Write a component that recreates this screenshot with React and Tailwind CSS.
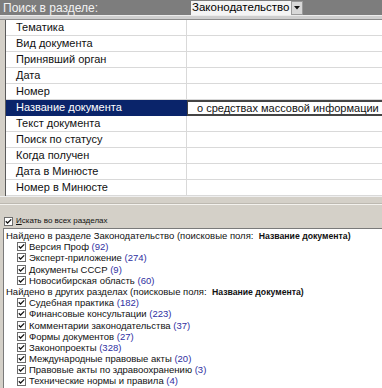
import React from 'react'

const fields = [
  'Тематика',
  'Вид документа',
  'Принявший орган',
  'Дата',
  'Номер',
  'Название документа',
  'Текст документа',
  'Поиск по статусу',
  'Когда получен',
  'Дата в Минюсте',
  'Номер в Минюсте',
]

const own = [
  ['Версия Проф', 92],
  ['Эксперт-приложение', 274],
  ['Документы СССР', 9],
  ['Новосибирская область', 60],
]

const other = [
  ['Судебная практика', 182],
  ['Финансовые консультации', 223],
  ['Комментарии законодательства', 37],
  ['Формы документов', 27],
  ['Законопроекты', 328],
  ['Международные правовые акты', 20],
  ['Правовые акты по здравоохранению', 3],
  ['Технические нормы и правила', 4],
]

function Check() {
  return (
    <span className="w-[9px] h-[9px] shrink-0 border border-[#6d6d6d] bg-white flex items-center justify-center">
      <svg viewBox="0 0 9 9" className="w-[7px] h-[7px]">
        <path d="M1 4.2 L3.3 6.5 L8 1.8" stroke="#111" strokeWidth="1.6" fill="none" />
      </svg>
    </span>
  )
}

function Item({ name, count }) {
  return (
    <div className="flex items-center h-[11.2px] pl-[11px] gap-[3px] whitespace-nowrap">
      <Check />
      <span>
        {name} <span className="text-[#2f2f9f]">({count})</span>
      </span>
    </div>
  )
}

function Found({ children }) {
  return (
    <div className="h-[11.2px] whitespace-nowrap">
      {children} (поисковые поля:&nbsp; <b className="text-[8.7px]">Название документа)</b>
    </div>
  )
}

export default function App() {
  return (
    <div className="w-[382px] h-[388px] overflow-hidden bg-[#d4d0c8] font-['Liberation_Sans',Arial,sans-serif]">
      <div className="h-[15px] bg-[#7d7d7d] flex items-center">
        <div className="w-[191px] pl-[3px] text-[12px] leading-none text-[#f2f2f2]">Поиск в разделе:</div>
        <div className="h-[14px] w-[100px] bg-[#f4f4f4] flex items-center pl-[1px] text-[11.5px] leading-none text-black whitespace-nowrap overflow-hidden">
          Законодательство
        </div>
        <div className="h-[14px] w-[12px] bg-[#d8d8d8] border border-[#9a9a9a] flex items-center justify-center">
          <svg viewBox="0 0 6 4" className="w-[6px] h-[4px]">
            <path d="M0 0 H6 L3 3.5 Z" fill="#111" />
          </svg>
        </div>
      </div>
      <div className="h-[5px] border-t border-[#ececec] border-b border-b-[#8c8c8c] bg-[#cfcfcf]" />

      <div className="ml-[5px] border-l border-[#5a5a5a] bg-white text-[11px] text-[#111]">
        {fields.map((f, i) =>
          i === 5 ? (
            <div key={f} className="flex h-[16px]">
              <div className="w-[181px] bg-[#0a246a] text-white pl-[10px] flex items-center border-b border-[#0a246a]">{f}</div>
              <div className="flex-1 border-y-2 border-l border-[#444] flex items-center pl-[9px] whitespace-nowrap overflow-hidden">
                о средствах массовой информации
              </div>
            </div>
          ) : (
            <div key={f} className="flex h-[16px] border-b border-[#d9d9d9]">
              <div className="w-[181px] pl-[10px] flex items-center border-r border-[#d9d9d9]">{f}</div>
              <div className="flex-1" />
            </div>
          )
        )}
      </div>

      <div className="h-[32px] border-t border-[#efefef] flex flex-col">
        <div className="h-[7px] border-b border-[#bdb9b1]" />
        <div className="h-[1px] bg-[#f4f2ee]" />
        <div className="flex-1 flex items-center gap-[3px] pl-[4px] pt-[9px] text-[8px] text-[#111]">
          <Check />
          <span>
            <span className="underline">И</span>скать во всех разделах
          </span>
        </div>
      </div>

      <div className="ml-[3px] h-[160px] bg-white border-l border-t border-[#7a7a7a] pl-[2px] pt-[1px] text-[9.5px] leading-[11.2px] text-[#111]">
        <Found>Найдено в разделе Законодательство</Found>
        {own.map(([n, c]) => (
          <Item key={n} name={n} count={c} />
        ))}
        <Found>Найдено в других разделах</Found>
        {other.map(([n, c]) => (
          <Item key={n} name={n} count={c} />
        ))}
      </div>
    </div>
  )
}
